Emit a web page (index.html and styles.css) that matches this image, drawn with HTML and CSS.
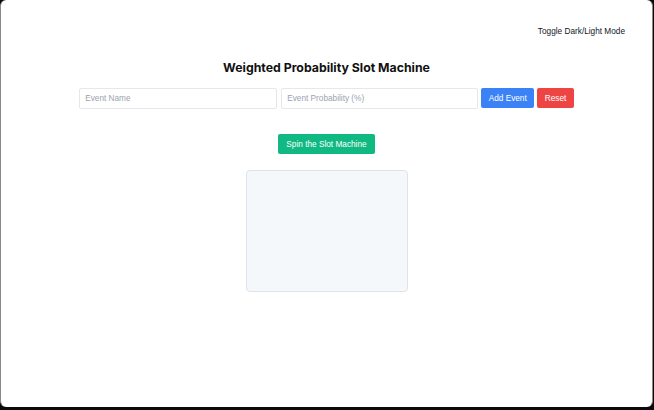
FILE: index.html
```html
<!DOCTYPE html>
<html lang="en">
<head>
<meta charset="utf-8">
<title>Weighted Probability Slot Machine</title>
<link rel="stylesheet" href="styles.css">
</head>
<body>
<div class="window">
  <header class="topbar">
    <button class="toggle" type="button">Toggle Dark/Light Mode</button>
  </header>
  <main class="content">
    <h1 class="title">Weighted Probability Slot Machine</h1>
    <div class="form-row">
      <input class="field" type="text" placeholder="Event Name">
      <input class="field" type="text" placeholder="Event Probability (%)">
      <button class="btn btn-blue" type="button">Add Event</button>
      <button class="btn btn-red" type="button">Reset</button>
    </div>
    <button class="btn btn-green spin" type="button">Spin the Slot Machine</button>
    <div class="reel"></div>
  </main>
</div>
</body>
</html>
```

FILE: styles.css
```css
html, body {
  margin: 0;
  padding: 0;
  background: #0a0a0a;
}
body {
  width: 654px;
  height: 410px;
  overflow: hidden;
  font-family: "Liberation Sans", Arial, sans-serif;
}
.window {
  box-sizing: border-box;
  width: 653px;
  height: 407px;
  background: #ffffff;
  border: 1px solid #8a8a8a;
  border-top: none;
  border-bottom: none;
  border-radius: 6px;
  display: flex;
  flex-direction: column;
}
.topbar {
  display: flex;
  justify-content: flex-end;
  padding: 26px 27px 0 0;
}
.toggle {
  background: none;
  border: none;
  padding: 0;
  font-family: inherit;
  font-size: 8.25px;
  color: #111827;
  line-height: 12px;
}
.content {
  display: flex;
  flex-direction: column;
  align-items: center;
}
.title {
  margin: 22px 0 0;
  font-family: Inter, "Noto Sans", sans-serif;
  font-size: 12.3px;
  font-weight: 700;
  color: #111;
  line-height: 16px;
}
.form-row {
  display: flex;
  gap: 3px;
  margin: 12px 0 0 0;
}
.field {
  box-sizing: border-box;
  width: 198px;
  height: 21px;
  border: 1px solid #e5e7eb;
  border-radius: 2px;
  padding: 0 5px;
  font-family: inherit;
  font-size: 8.25px;
  color: #374151;
  background: #fff;
  outline: none;
}
.field + .field {
  margin-left: 1px;
  width: 197px;
}
.field::placeholder {
  color: #9ca3af;
}
.btn {
  box-sizing: border-box;
  height: 20px;
  border: none;
  border-radius: 2px;
  padding: 0 7.5px;
  font-family: inherit;
  font-size: 8.25px;
  color: #fff;
}
.btn-blue { background: #3b82f6; }
.btn-red { background: #ef4444; }
.btn-green { background: #10b981; }
.spin {
  margin-top: 25px;
  padding: 0 8px;
}
.reel {
  box-sizing: border-box;
  margin-top: 16px;
  width: 162px;
  height: 122px;
  background: #f5f8fb;
  border: 1px solid #dfe3e8;
  border-radius: 4px;
}
```
